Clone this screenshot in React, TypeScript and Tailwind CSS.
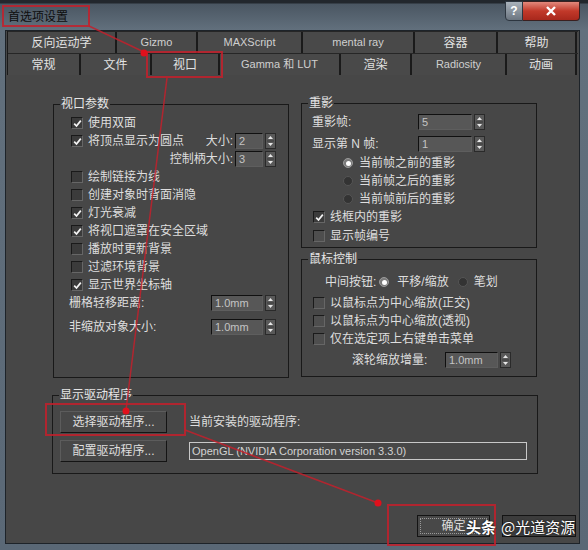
import React from 'react';

const Check = ({ on, dim }: { on?: boolean; dim?: boolean }) => (
  <span
    className={`flex h-[12px] w-[12px] shrink-0 items-center justify-center border border-t-[#1a1a1a] border-l-[#1a1a1a] border-b-[#666] border-r-[#666] ${
      dim ? 'bg-[#4e4e4e]' : 'bg-[#3b3b3b]'
    }`}
  >
    {on && (
      <svg width="9" height="9" viewBox="0 0 9 9">
        <path d="M1.2 4.6 L3.5 7 L7.8 1.6" stroke="#f4f4f4" strokeWidth="1.7" fill="none" />
      </svg>
    )}
  </span>
);

const Radio = ({ on }: { on?: boolean }) => (
  <span
    className={`flex h-[10px] w-[10px] shrink-0 items-center justify-center rounded-full border ${
      on ? 'border-[#9a9a9a] bg-[#7a7a7a]' : 'border-[#555] bg-[#333]'
    }`}
  >
    {on && <span className="h-[5px] w-[5px] rounded-full bg-white" />}
  </span>
);

const Spin = ({ v, w }: { v: string; w: string }) => (
  <div className="flex shrink-0 items-center gap-[2px]">
    <div
      className={`flex h-[16px] items-center border border-t-[#101010] border-l-[#101010] border-b-[#5e5e5e] border-r-[#5e5e5e] bg-[#575757] pl-[3px] text-[11px] text-[#c4c4c4] ${w}`}
    >
      {v}
    </div>
    <div className="flex h-[16px] w-[11px] items-center justify-center border border-[#2a2a2a] bg-[#595959]">
      <svg width="7" height="12" viewBox="0 0 7 12">
        <path d="M3.5 1 L6 4 L1 4 Z" fill="#e8e8e8" />
        <path d="M0 6 H7" stroke="#3a3a3a" strokeWidth="1" />
        <path d="M3.5 11 L6 8 L1 8 Z" fill="#e8e8e8" />
      </svg>
    </div>
  </div>
);

const CbRow = ({ on, label, dim }: { on?: boolean; label: string; dim?: boolean }) => (
  <div className="flex h-[18px] items-center">
    <Check on={on} dim={dim} />
    <span className="ml-[5px]">{label}</span>
  </div>
);

const Group = ({ title, className, children }: { title: string; className: string; children: React.ReactNode }) => (
  <fieldset className={`border border-[#191919] ${className}`}>
    <legend className="ml-[6px] px-[1px] leading-[14px] text-[#e6e6e6]">{title}</legend>
    {children}
  </fieldset>
);

const Btn = ({ label, className }: { label: string; className?: string }) => (
  <div
    className={`flex h-[22px] items-center justify-center border border-t-[#5c5c5c] border-l-[#5c5c5c] border-b-[#141414] border-r-[#141414] bg-[#484848] ${className ?? ''}`}
  >
    {label}
  </div>
);

const row1 = [
  { l: '反向运动学', w: 'w-[109px]' },
  { l: 'Gizmo', w: 'w-[81px]', en: true },
  { l: 'MAXScript', w: 'w-[105px]', en: true },
  { l: 'mental ray', w: 'w-[112px]', en: true },
  { l: '容器', w: 'w-[83px]' },
  { l: '帮助', w: 'w-[79px]' },
];

const row2 = [
  { l: '常规', w: 'w-[73px]' },
  { l: '文件', w: 'w-[71px]' },
  { l: '视口', w: 'w-[68px]' },
  { l: 'Gamma 和 LUT', w: 'w-[121px]', en: true },
  { l: '渲染', w: 'w-[71px]' },
  { l: 'Radiosity', w: 'w-[95px]', en: true },
  { l: '动画', w: 'w-[70px]' },
];

const TabRow = ({ tabs }: { tabs: { l: string; w: string; en?: boolean }[] }) => (
  <div className="flex h-[22px] border-t border-[#262626]">
    {tabs.map((t) => (
      <div
        key={t.l}
        className={`flex items-center justify-center border-r-2 border-[#1a1a1a] bg-[#494949] ${t.w} ${
          t.en ? 'text-[11px] text-[#cfcfcf]' : 'text-[#e2e2e2]'
        }`}
      >
        {t.l}
      </div>
    ))}
  </div>
);

export default function App() {
  return (
    <div className="relative h-[550px] w-[588px] overflow-hidden bg-[linear-gradient(180deg,#22272d_0px,#22272d_3px,#4a5662_4px,#62707d_30px,#5a6876_100%)] font-['Liberation_Sans','Noto_Sans_CJK_SC',sans-serif] text-[12px] text-[#dedede]">
      {/* title bar */}
      <div className="flex h-[30px]">
        <div className="flex items-center pl-[8px] pt-[3px] text-[12px] text-[#0e0e0e]">首选项设置</div>
        <div className="ml-auto mr-[8px] flex h-[21px] self-start pt-[1px]">
          <div className="flex w-[18px] items-center justify-center rounded-bl-[4px] border border-[#2d3640] bg-[linear-gradient(180deg,#a9b2bb,#6b7580)] text-[12px] font-bold text-white">
            ?
          </div>
          <div className="flex w-[57px] items-center justify-center rounded-br-[4px] border border-l-0 border-[#3a2020] bg-[linear-gradient(180deg,#e2897c,#c2392a_50%,#a8281c)]">
            <svg width="12" height="10" viewBox="0 0 12 10">
              <path d="M2 1 L10 9 M10 1 L2 9" stroke="#fff" strokeWidth="2.4" />
            </svg>
          </div>
        </div>
      </div>

      {/* body */}
      <div className="ml-[5px] flex h-[514px] w-[575px] flex-col border border-[#1d2329] bg-[#474747]">
        <div className="mx-[1px] border-l border-[#1a1a1a]">
          <TabRow tabs={row1} />
          <TabRow tabs={row2} />
        </div>

        <div className="flex flex-col pl-[47px] pr-[3px] pt-[22px]">
          <div className="flex gap-[12px]">
            <Group title="视口参数" className="h-[281px] w-[236px]">
              <div className="flex flex-col pl-[17px] pr-[12px] pt-[3px]">
                <CbRow on label="使用双面" />
                <div className="flex h-[18px] items-center">
                  <Check on />
                  <span className="ml-[5px]">将顶点显示为圆点</span>
                  <span className="ml-auto mr-[2px]">大小:</span>
                  <Spin v="2" w="w-[28px]" />
                </div>
                <div className="flex h-[18px] items-center justify-end">
                  <span className="mr-[2px]">控制柄大小:</span>
                  <Spin v="3" w="w-[28px]" />
                </div>
                <CbRow label="绘制链接为线" />
                <CbRow label="创建对象时背面消隐" />
                <CbRow on label="灯光衰减" />
                <CbRow on label="将视口遮罩在安全区域" />
                <CbRow label="播放时更新背景" />
                <CbRow label="过滤环境背景" />
                <CbRow on label="显示世界坐标轴" />
                <div className="-ml-[2px] flex h-[18px] items-center justify-between">
                  <span>栅格轻移距离:</span>
                  <Spin v="1.0mm" w="w-[52px]" />
                </div>
                <div className="-ml-[2px] mt-[6px] flex h-[18px] items-center justify-between">
                  <span>非缩放对象大小:</span>
                  <Spin v="1.0mm" w="w-[52px]" />
                </div>
              </div>
            </Group>

            <div className="flex flex-col gap-[4px]">
              <Group title="重影" className="-mt-[1px] h-[152px] w-[236px]">
                <div className="flex flex-col pl-[10px] pt-[3px]">
                  <div className="flex h-[18px] items-center">
                    <span className="w-[106px]">重影帧:</span>
                    <Spin v="5" w="w-[54px]" />
                  </div>
                  <div className="mt-[4px] flex h-[18px] items-center">
                    <span className="w-[106px]">显示第 N 帧:</span>
                    <Spin v="1" w="w-[54px]" />
                  </div>
                  <div className="ml-[31px] mt-[1px] flex h-[18px] items-center">
                    <Radio on />
                    <span className="ml-[6px]">当前帧之前的重影</span>
                  </div>
                  <div className="ml-[31px] flex h-[18px] items-center">
                    <Radio />
                    <span className="ml-[6px]">当前帧之后的重影</span>
                  </div>
                  <div className="ml-[31px] flex h-[18px] items-center">
                    <Radio />
                    <span className="ml-[6px]">当前帧前后的重影</span>
                  </div>
                  <div className="ml-[1px]">
                    <CbRow on label="线框内的重影" />
                    <div className="mt-[1px]">
                      <CbRow dim label="显示帧编号" />
                    </div>
                  </div>
                </div>
              </Group>

              <Group title="鼠标控制" className="h-[125px] w-[236px]">
                <div className="flex flex-col pl-[10px] pt-[7px]">
                  <div className="ml-[13px] flex h-[18px] items-center">
                    <span>中间按钮:</span>
                    <span className="ml-[3px]"><Radio on /></span>
                    <span className="ml-[8px]">平移/缩放</span>
                    <span className="ml-[9px]"><Radio /></span>
                    <span className="ml-[6px]">笔划</span>
                  </div>
                  <div className="ml-[1px] mt-[3px]">
                    <CbRow dim label="以鼠标点为中心缩放(正交)" />
                    <CbRow dim label="以鼠标点为中心缩放(透视)" />
                    <CbRow dim label="仅在选定项上右键单击菜单" />
                  </div>
                  <div className="ml-[40px] mt-[3px] flex h-[18px] items-center">
                    <span className="w-[93px]">滚轮缩放增量:</span>
                    <Spin v="1.0mm" w="w-[53px]" />
                  </div>
                </div>
              </Group>
            </div>
          </div>

          <Group title="显示驱动程序" className="-ml-[1px] mt-[10px] h-[86px] w-[486px]">
            <div className="flex gap-[22px] pl-[7px] pt-[9px]">
              <div className="flex flex-col gap-[7px]">
                <Btn label="选择驱动程序..." className="w-[107px]" />
                <Btn label="配置驱动程序..." className="w-[107px]" />
              </div>
              <div className="flex flex-col">
                <div className="flex h-[22px] items-center">当前安装的驱动程序:</div>
                <div className="mt-[9px] flex h-[18px] w-[338px] items-center border border-[#c8c8c8] pl-[2px] text-[11px] text-[#d2d2d2]">
                  OpenGL (NVIDIA Corporation version 3.3.0)
                </div>
              </div>
            </div>
          </Group>

          <div className="mt-[41px] flex justify-end gap-[12px]">
            <div className="flex h-[22px] w-[73px] items-center justify-center border border-[#141414] bg-[#484848] p-[2px]">
              <div className="flex h-full w-full items-center justify-center border border-dotted border-[#9a9a9a]">确定</div>
            </div>
            <div className="h-[22px] w-[74px] border border-[#141414] bg-[#3c3c3c]" />
          </div>
        </div>
      </div>

      {/* annotations */}
      <svg className="pointer-events-none absolute left-0 top-0" width="588" height="550" viewBox="0 0 588 550">
        <g stroke="#c3202c" fill="none" strokeOpacity="0.85">
          <rect x="3" y="6" width="86" height="20" strokeWidth="2" />
          <line x1="89" y1="26" x2="144" y2="52" strokeWidth="1.5" />
          <rect x="147" y="52" width="75" height="25" strokeWidth="2" />
          <line x1="167" y1="78" x2="126" y2="410" strokeWidth="1.5" />
          <rect x="46" y="404" width="139" height="31" strokeWidth="2" />
          <line x1="185" y1="430" x2="378" y2="503" strokeWidth="1.5" />
          <rect x="388" y="505" width="107" height="40" strokeWidth="2" />
        </g>
        <g fill="#e0101c">
          <circle cx="144" cy="53" r="3.5" />
          <circle cx="126" cy="411" r="3.5" />
          <circle cx="378" cy="503" r="3.5" />
        </g>
      </svg>

      {/* watermark */}
      <div className="absolute left-[466px] top-[517px] flex items-center gap-[5px] font-['Noto_Sans_CJK_SC',sans-serif] text-[15px] leading-[20px] text-white [text-shadow:0_0_2px_#000]">
        <span className="font-bold">头条</span>
        <span>@光道资源</span>
      </div>
    </div>
  );
}
